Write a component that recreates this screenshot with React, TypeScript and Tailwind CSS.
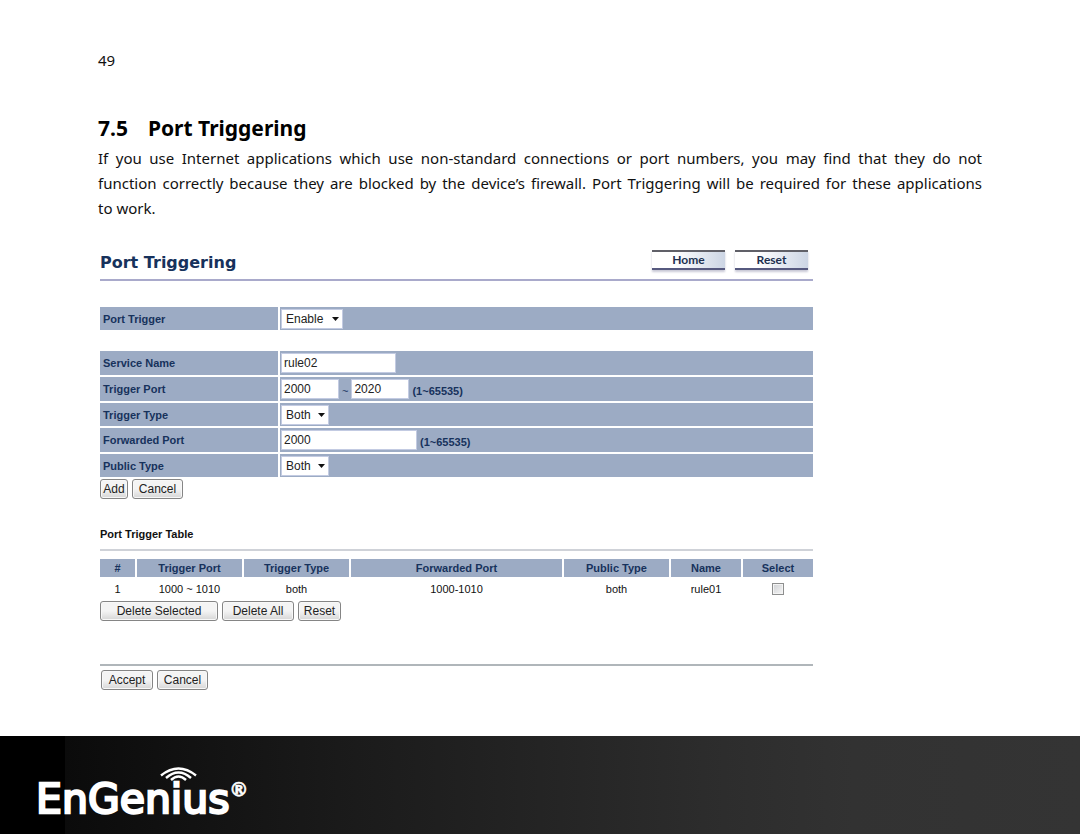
import React from "react";

const buttonClass =
  "flex h-5 items-center justify-center rounded-[3px] border border-[#858585] bg-linear-to-b from-[#f4f4f4] from-50% to-[#d6d6d6] text-[12px] leading-4 text-[#222] shadow-[inset_0_0_0_1px_#f8f8f8]";
const fieldClass = "h-5 border border-[#c3cbe2] bg-white pl-0.5 text-[12px] leading-4 text-[#222] outline-none";
const labelClass = "flex w-[178px] shrink-0 items-center bg-[#9cabc4] pl-[3px] text-[11px] leading-4 font-bold text-[#17325c]";
const valueClass = "flex min-w-0 flex-1 items-center bg-[#9cabc4] pl-px";
const hintClass = "pt-1 pl-[3px] text-[11px] leading-4 font-bold text-[#17325c]";

function Row({ label, id, size, children }: { label: string; id: string; size: string; children: React.ReactNode }) {
  return (
    <div className={`flex gap-0.5 ${size}`}>
      <label htmlFor={id} className={labelClass}>{label}</label>
      <div className={valueClass}>{children}</div>
    </div>
  );
}

function Select({ id, width, options }: { id: string; width: string; options: string[] }) {
  return (
    <div className={`relative ${width}`}>
      <select id={id} className="block h-5 w-full appearance-none border border-[#c3cbe2] bg-white pl-1 text-[12px] leading-4 text-[#222] outline-none">
        {options.map((o) => <option key={o}>{o}</option>)}
      </select>
      <svg viewBox="0 0 7 4" className="pointer-events-none absolute top-2 right-1 h-1 w-[7px]">
        <path d="M0 0h7L3.5 4z" fill="#111" />
      </svg>
    </div>
  );
}

function NavButton({ children }: { children: string }) {
  return (
    <button className="flex h-5 w-[73px] items-center justify-center border-t-2 border-b-2 border-t-[#606068] border-b-[#56597f] bg-linear-to-r from-white from-30% to-[#ccd5e4] font-[Lato,sans-serif] text-[12px] leading-4 font-bold text-[#20304f] shadow-[0_2px_2px_#c9c9d6]">
      {children}
    </button>
  );
}

const columns = [
  ["#", "w-[35px]"],
  ["Trigger Port", "w-[105px]"],
  ["Trigger Type", "w-[105px]"],
  ["Forwarded Port", ""],
  ["Public Type", "w-[105px]"],
  ["Name", "w-[70px]"],
  ["Select", "w-[70px]"],
];

export default function App() {
  return (
    <div className="flex min-h-screen flex-col bg-white font-['Liberation_Sans',Arial,sans-serif] text-black">
      <main className="flex-1 px-[98px] pt-12">
        <div className="font-['Noto_Sans',sans-serif] text-[15px] leading-[25px] text-[#111]">
          <p>49</p>
          <h1 className="mt-10 flex gap-5 text-[21px] leading-[30px] font-bold text-black">
            <span>7.5</span>
            <span>Port Triggering</span>
          </h1>
          <p className="mt-[3px]">
            <span className="block text-justify [text-align-last:justify]">
              If you use Internet applications which use non-standard connections or port numbers, you may find that they do not{" "}
            </span>
            <span className="block text-justify [text-align-last:justify]">
              function correctly because they are blocked by the device’s firewall. Port Triggering will be required for these applications{" "}
            </span>
            <span className="block">to work.</span>
          </p>
        </div>

        <section className="mt-[29px] ml-0.5 max-w-[713px]">
          <header className="flex h-[31px] items-start justify-between border-b-2 border-[#a9aacb] pr-[5px]">
            <h2 className="pt-[3px] font-['DejaVu_Sans',Verdana,sans-serif] text-[16px] leading-5 font-bold text-[#17325c]">Port Triggering</h2>
            <nav className="flex gap-2.5">
              <NavButton>Home</NavButton>
              <NavButton>Reset</NavButton>
            </nav>
          </header>

          <form onSubmit={(e) => e.preventDefault()}>
            <div className="mt-[26px]">
              <Row label="Port Trigger" id="enable" size="h-[23px]">
                <Select id="enable" width="w-[62px]" options={["Enable", "Disable"]} />
              </Row>
            </div>
            <div className="mt-[21px] flex flex-col gap-0.5">
              <Row label="Service Name" id="service" size="h-6">
                <input id="service" defaultValue="rule02" className={`${fieldClass} w-[115px]`} />
              </Row>
              <Row label="Trigger Port" id="from" size="h-6">
                <input id="from" defaultValue="2000" className={`${fieldClass} w-[58px]`} />
                <span className="px-[3px] pt-1 text-[11px] leading-4 text-[#17325c]">~</span>
                <input aria-label="Trigger Port end" defaultValue="2020" className={`${fieldClass} w-[58px]`} />
                <span className={hintClass}>(1~65535)</span>
              </Row>
              <Row label="Trigger Type" id="type" size="h-[23px]">
                <Select id="type" width="w-12" options={["Both", "TCP", "UDP"]} />
              </Row>
              <Row label="Forwarded Port" id="forward" size="h-6">
                <input id="forward" defaultValue="2000" className={`${fieldClass} w-[136px]`} />
                <span className={hintClass}>(1~65535)</span>
              </Row>
              <Row label="Public Type" id="public" size="h-[23px]">
                <Select id="public" width="w-12" options={["Both", "TCP", "UDP"]} />
              </Row>
            </div>
            <div className="mt-0.5 flex gap-1">
              <button className={`${buttonClass} w-7`}>Add</button>
              <button className={`${buttonClass} w-[51px]`}>Cancel</button>
            </div>
          </form>

          <h3 className="mt-[27px] text-[11px] leading-4 font-bold text-[#111]">Port Trigger Table</h3>
          <hr className="mt-[7px] border-t-2 border-[#cfd2d8]" />
          <table className="mt-2 -ml-0.5 w-[calc(100%+4px)] table-fixed border-separate border-spacing-x-0.5 border-spacing-y-0 text-center text-[11px] leading-4">
            <thead>
              <tr className="text-[#17325c]">
                {columns.map(([name, width]) => (
                  <th key={name} className={`${width} h-[18px] bg-[#9cabc4] p-0 font-bold`}>{name}</th>
                ))}
              </tr>
            </thead>
            <tbody>
              <tr className="text-[#111]">
                {["1", "1000 ~ 1010", "both", "1000-1010", "both", "rule01"].map((v, i) => (
                  <td key={i} className="h-6 p-0">{v}</td>
                ))}
                <td className="p-0">
                  <input type="checkbox" aria-label="Select rule01" className="mx-auto block size-3 appearance-none border border-[#8e8f8f] bg-linear-to-br from-[#cfd1d4] to-[#f6f6f6] shadow-[inset_0_0_0_1px_#f4f4f4]" />
                </td>
              </tr>
            </tbody>
          </table>
          <div className="flex gap-1">
            <button className={`${buttonClass} w-[118px]`}>Delete Selected</button>
            <button className={`${buttonClass} w-[72px]`}>Delete All</button>
            <button className={`${buttonClass} w-[43px]`}>Reset</button>
          </div>

          <hr className="mt-[43px] border-t-2 border-[#b0b6ba]" />
          <div className="mt-1 flex gap-1 pl-px">
            <button className={`${buttonClass} w-[52px]`}>Accept</button>
            <button className={`${buttonClass} w-[51px]`}>Cancel</button>
          </div>
        </section>
      </main>

      <footer className="h-[98px] bg-[linear-gradient(to_right,#000_6%,#0b0b0b_6%,#1b1b1b_33%,#2d2d2d_67%,#323232_79%,#343434)] pt-6 pl-8">
        <svg viewBox="0 0 224 66" className="h-[66px] w-56" role="img" aria-label="EnGenius">
          <text x="4" y="53" fill="white" stroke="white" strokeWidth="2.4" fontFamily="DejaVu Sans, sans-serif" fontSize="41">EnGenius</text>
          <g fill="none" stroke="white" strokeWidth="2.4">
            <path d="M129 15.500Q146.500 1.500 164 15.500" />
            <path d="M134 18Q146.500 7 159 18" />
            <path d="M139 20Q146.500 13 154 20" />
          </g>
          <text x="199" y="36" fill="white" stroke="white" strokeWidth="0.6" fontFamily="Lato, sans-serif" fontWeight="700" fontSize="19">®</text>
        </svg>
      </footer>
    </div>
  );
}
